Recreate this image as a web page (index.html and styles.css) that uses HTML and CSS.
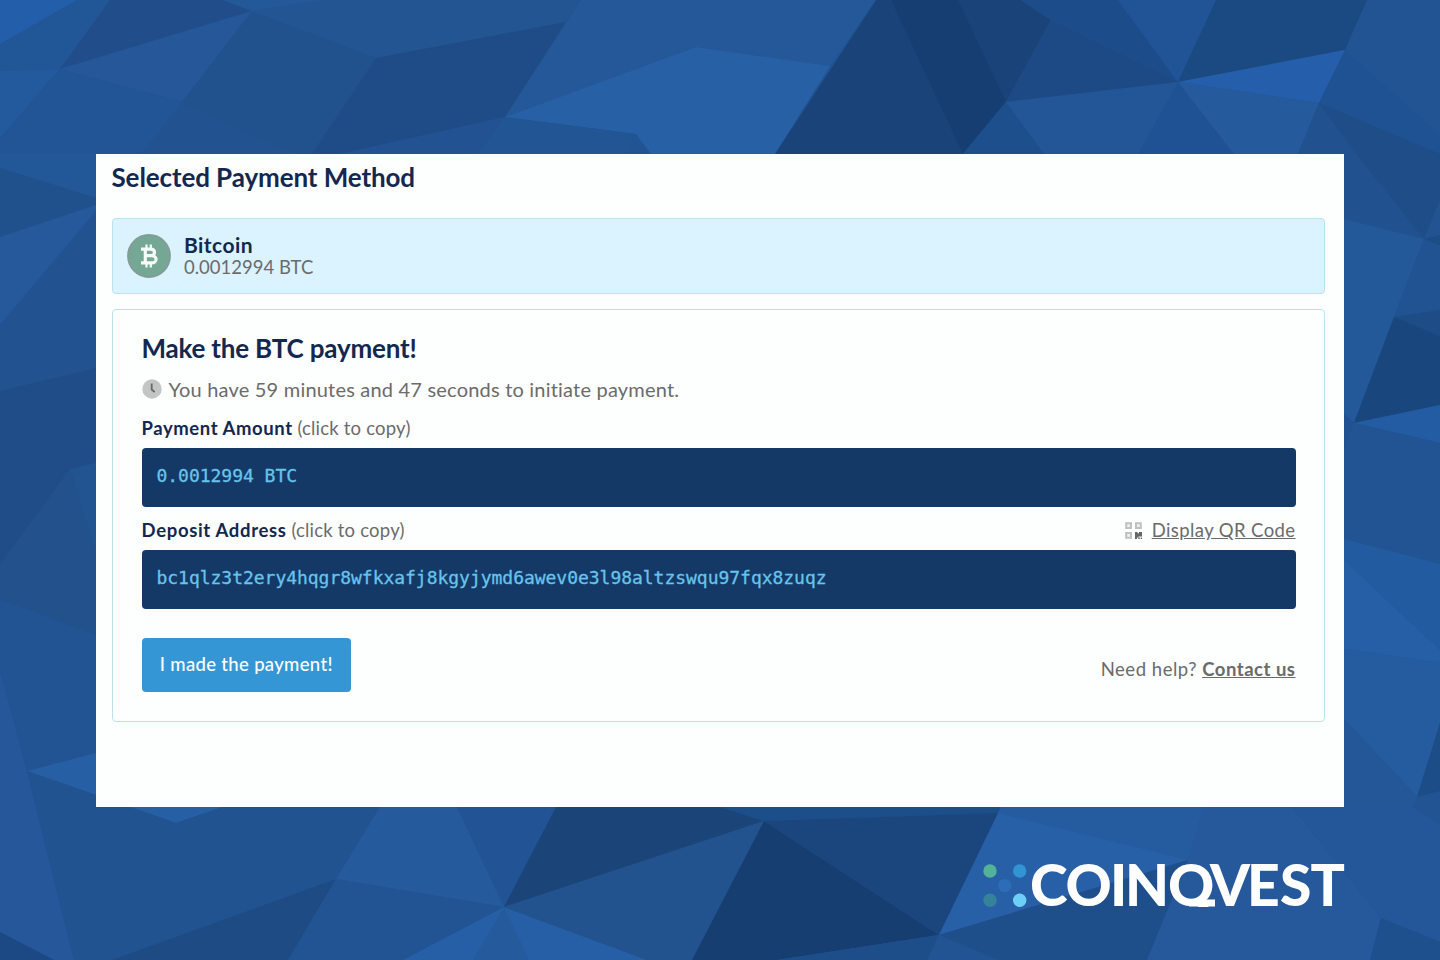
FILE: index.html
```
<!DOCTYPE html>
<html lang="en">
<head>
    <meta charset="UTF-8">
    <meta name="viewport" content="width=device-width, initial-scale=1.0">
    <title>COINQVEST Checkout</title>
    <link rel="stylesheet" href="styles.css">
</head>
<body>
  <svg class="backdrop" viewBox="0 0 1440 960" preserveAspectRatio="none" aria-hidden="true">
    <rect width="1440" height="960" fill="#225494"/>
    <!-- top -->
    <polygon fill="#225eaa" points="0,0 77,0 0,44"/>
    <polygon fill="#225797" points="77,0 110,0 60,69 0,71 0,44"/>
    <polygon fill="#214e8a" points="110,0 223,0 252,11 60,69"/>
    <polygon fill="#235899" points="223,0 325,0 252,11"/>
    <polygon fill="#235a9e" points="0,71 60,69 0,138"/>
    <polygon fill="#255799" points="60,69 252,11 182,102"/>
    <polygon fill="#225596" points="60,69 182,102 142,154 0,154 0,138"/>
    <polygon fill="#21528e" points="252,11 376,58 312,154 296,154 182,102"/>
    <polygon fill="#225390" points="182,102 296,154 142,154"/>
    <polygon fill="#225592" points="325,0 581,0 566,22 376,58 252,11"/>
    <polygon fill="#1f4c87" points="376,58 566,22 505,117 340,154 312,154"/>
    <polygon fill="#225291" points="505,117 478,154 340,154"/>
    <polygon fill="#255899" points="581,0 876,0 830,66 696,47 505,117"/>
    <polygon fill="#2760a5" points="696,47 830,66 775,154 651,154 636,134 505,117"/>
    <polygon fill="#225593" points="505,117 636,134 627,154 478,154"/>
    <polygon fill="#1a4479" points="876,0 1021,0 1051,20 1006,102 963,154 775,154"/>
    <polygon fill="#163e72" points="891,0 958,0 1006,102 963,154"/>
    <polygon fill="#1c4d8a" points="1021,0 1118,0 1178,82 1051,20"/>
    <polygon fill="#1d4984" points="1051,20 1178,82 1006,102"/>
    <polygon fill="#215496" points="1118,0 1216,0 1178,82"/>
    <polygon fill="#1b4982" points="1216,0 1367,0 1345,50 1178,82"/>
    <polygon fill="#255fab" points="1345,50 1319,103 1178,82"/>
    <polygon fill="#225696" points="1178,82 1234,154 963,154 1006,102"/>
    <polygon fill="#1f5294" points="1178,82 1234,154 1138,154"/>
    <polygon fill="#1d4f8d" points="1006,102 1044,154 963,154"/>
    <polygon fill="#255a9c" points="1178,82 1319,103 1298,154 1234,154"/>
    <polygon fill="#225494" points="1367,0 1440,0 1440,77 1345,50"/>
    <polygon fill="#1e5293" points="1345,50 1440,135 1440,154 1319,103"/>
    <!-- left -->
    <polygon fill="#225798" points="0,154 96,154 96,198 0,168"/>
    <polygon fill="#21518c" points="0,168 96,198 96,205 0,237"/>
    <polygon fill="#25599b" points="0,237 96,205 96,211 0,325"/>
    <polygon fill="#225390" points="0,325 96,211 96,368 0,391"/>
    <polygon fill="#204d87" points="0,391 96,368 96,463 70,469 0,565"/>
    <polygon fill="#215490" points="70,469 96,463 96,552"/>
    <polygon fill="#22518b" points="70,469 96,552 96,635 0,599 0,565"/>
    <polygon fill="#225494" points="0,599 96,635 96,753 27,771 0,672"/>
    <polygon fill="#25579a" points="0,672 27,771 74,960 54,960 0,932"/>
    <polygon fill="#275fa5" points="27,771 96,753 223,807 176,823 96,795"/>
    <!-- bottom -->
    <polygon fill="#215390" points="27,771 96,795 176,823 223,807 380,807 336,879 112,960 74,960"/>
    <polygon fill="#1e4b84" points="336,879 288,960 112,960"/>
    <polygon fill="#1c4983" points="0,932 54,960 0,960"/>
    <polygon fill="#255b9d" points="380,807 457,807 504,907 336,879"/>
    <polygon fill="#225495" points="457,807 556,807 504,907"/>
    <polygon fill="#225494" points="336,879 504,907 403,960 288,960"/>
    <polygon fill="#265fa5" points="504,907 647,960 403,960"/>
    <polygon fill="#255b9d" points="504,907 529,960 473,960"/>
    <polygon fill="#1b4479" points="556,807 720,807 764,821 504,907"/>
    <polygon fill="#22538f" points="504,907 764,821 692,960 647,960"/>
    <polygon fill="#173e71" points="764,821 939,935 777,960 692,960"/>
    <polygon fill="#1c4e8a" points="720,807 1001,807 998,813 764,821"/>
    <polygon fill="#1b467d" points="764,821 998,813 939,935"/>
    <polygon fill="#1e4e8a" points="777,960 939,935 927,960"/>
    <polygon fill="#2760a6" points="1001,807 1204,807 1188,860 939,935"/>
    <polygon fill="#255b9f" points="1001,807 1204,807 1188,860 998,813"/>
    <polygon fill="#1f4f8b" points="939,935 1188,860 1147,960 998,960"/>
    <polygon fill="#225494" points="939,935 998,960 927,960"/>
    <polygon fill="#25599c" points="1204,807 1292,807 1381,918 1370,960 1147,960 1188,860"/>
    <polygon fill="#235799" points="1292,807 1413,807 1440,825 1440,942 1381,918"/>
    <polygon fill="#1f508e" points="1381,918 1440,942 1440,960 1370,960"/>
    <!-- right -->
    <polygon fill="#21518e" points="1319,103 1356,154 1424,239 1344,219 1344,154 1298,154"/>
    <polygon fill="#1e4d88" points="1319,103 1440,154 1440,200 1424,239 1353,150"/>
    <polygon fill="#235899" points="1344,219 1424,239 1394,317 1354,423 1344,414"/>
    <polygon fill="#215292" points="1424,239 1440,235 1440,310 1394,317"/>
    <polygon fill="#1e4c85" points="1424,239 1440,235 1440,245"/>
    <polygon fill="#1e4c87" points="1394,317 1440,310 1440,336"/>
    <polygon fill="#1a467e" points="1394,317 1440,336 1440,405 1354,423"/>
    <polygon fill="#235ca2" points="1354,423 1440,405 1440,443"/>
    <polygon fill="#205190" points="1344,414 1354,423 1344,448"/>
    <polygon fill="#225494" points="1354,423 1440,443 1440,564 1344,539 1344,448"/>
    <polygon fill="#235ba1" points="1344,539 1440,564 1440,650 1344,560"/>
    <polygon fill="#265fa5" points="1344,560 1440,650 1440,663 1344,649"/>
    <polygon fill="#245c9f" points="1344,649 1440,663 1440,723 1417,797 1344,719"/>
    <polygon fill="#1d4d87" points="1440,723 1440,791 1417,797"/>
    <polygon fill="#235798" points="1344,719 1417,797 1413,807 1344,807"/>
  </svg>

  <div class="checkout">
    <h1>Selected Payment Method</h1>
    <div class="method">
      <svg class="coin" viewBox="0 0 44 44">
        <circle cx="22" cy="22" r="21" fill="#74a895" stroke="#849b99" stroke-width="1.800"/>
        <g fill="none" stroke="#f4fbf8" stroke-width="3.200">
          <path d="M14 15.200h9.500c5.400 0 5.400 6.500 0 6.500h-5.200M18.300 21.700h6.300c6 0 6 7.200 0 7.200h-10.600M18.300 15v14"/>
          <path stroke-width="2.200" d="M19.500 10.500v4M23.800 10.500v4M19.500 29.500v4M23.800 29.500v4"/>
        </g>
      </svg>
      <div class="method-text">
        <div class="method-name">Bitcoin</div>
        <div class="method-amount">0.0012994 BTC</div>
      </div>
    </div>

    <div class="payment">
      <h2>Make the BTC payment!</h2>
      <div class="timer">
        <svg class="clock" viewBox="0 0 20 20">
          <circle cx="10" cy="10" r="9.700" fill="#c3c4c4"/>
          <path d="M9.700 4.500v6l3 2.700" fill="none" stroke="#686868" stroke-width="1.800"/>
        </svg>
        <span class="timer-text">You have 59 minutes and 47 seconds to initiate payment.</span>
      </div>

      <div class="field-head">
        <div><span class="label amount-label">Payment Amount</span> <span class="hint">(click to copy)</span></div>
      </div>
      <div class="code">0.0012994 BTC</div>

      <div class="field-head address-head">
        <div><span class="label deposit-label">Deposit Address</span> <span class="hint">(click to copy)</span></div>
        <div class="qr">
          <svg class="qr-icon" viewBox="0 0 17 17">
            <g fill="#f0f0f0" stroke="#bfc0c0" stroke-width="2">
              <path d="M1.200 1.200h4.800v4.800h-4.800zM11 1.200h4.800v4.800h-4.800zM1.200 11h4.800v4.800h-4.800z"/>
            </g>
            <path fill="#666" d="M10 10h2.500v1.300h1.500v-1.300h3v4.500h-3.500v1h-1.500v1.500h-2zM13.300 15.500h1.500v1.500h-1.500zM15.700 15.500h1.300v1.500h-1.300z"/>
          </svg>
          <a class="qr-link">Display QR Code</a>
        </div>
      </div>
      <div class="code">bc1qlz3t2ery4hqgr8wfkxafj8kgyjymd6awev0e3l98altzswqu97fqx8zuqz</div>

      <div class="actions">
        <button>I made the payment!</button>
        <div class="help">Need help? <a>Contact us</a></div>
      </div>
    </div>
  </div>

  <div class="footer">
    <svg class="logo" viewBox="0 0 361 44">
      <clipPath id="wordmark">
        <rect x="44" y="-10" width="320" height="53"/>
      </clipPath>
      <circle cx="7" cy="7" r="6.700" fill="#52b398"/>
      <circle cx="36.700" cy="7" r="6.700" fill="#3394d4"/>
      <circle cx="21.800" cy="21.600" r="6.700" fill="#2d6cb7"/>
      <circle cx="7" cy="36.300" r="6.700" fill="#35839b"/>
      <circle cx="36.700" cy="36.300" r="6.700" fill="#6dcff6"/>
      <g clip-path="url(#wordmark)">
        <text class="logo-text" y="42" x="47 82.500 127 142 185 227 264 297 327.500">COINQVEST</text>
      </g>
      <!-- flat tail of the Q -->
      <rect x="206" y="35.500" width="26" height="7" fill="#fff"/>
    </svg>
  </div>
</body>
</html>
```
FILE: styles.css
```
body {
  font-family: Lato, 'Liberation Sans', sans-serif;
  background-color: #225494;
  color: #6b6b6b;
  margin: 0;
  height: 960px;
  padding: 154px 96px 0;
  box-sizing: border-box;
  overflow: hidden;
}
.backdrop {
  position: absolute;
  top: 0;
  left: 0;
  width: 1440px;
  height: 960px;
  z-index: -1;
}
.checkout {
  background-color: #fdfefe;
  height: 652.5px;
  padding: 5px 19px 0 15.5px;
  box-sizing: border-box;
}
h1, h2 {
  color: #14284f;
  font-size: 26px;
  line-height: 36px;
  font-weight: bold;
  margin: 0;
}
h1 {
  letter-spacing: -0.1px;
}
h2 {
  letter-spacing: -0.2px;
}
.method {
  display: flex;
  gap: 13.5px;
  height: 76px;
  margin-top: 23px;
  padding: 14.5px 14px 0;
  background-color: #daf3ff;
  border: 1.5px solid #b9e1ef;
  border-radius: 4px;
  box-sizing: border-box;
}
.coin {
  width: 44px;
  height: 44px;
}
.method-name {
  color: #14284f;
  font-size: 21px;
  line-height: 21px;
  font-weight: bold;
  letter-spacing: 0.45px;
}
.method-amount {
  font-size: 18.5px;
  line-height: 24px;
}
.payment {
  height: 413px;
  margin-top: 15px;
  padding: 20px 28.5px 0 29px;
  border: 1.5px solid #b9e1ef;
  border-radius: 4px;
  box-sizing: border-box;
}
.timer {
  display: flex;
  align-items: center;
  gap: 7px;
  height: 24px;
  margin-top: 11px;
  font-size: 20px;
}
.timer-text {
  letter-spacing: 0.2px;
  line-height: 22px;
}
.clock {
  width: 20px;
  height: 20px;
}
.field-head {
  display: flex;
  justify-content: space-between;
  align-items: center;
  height: 24px;
  margin-top: 15px;
  font-size: 18.5px;
  line-height: 24px;
}
.address-head {
  margin-top: 11px;
}
.label {
  color: #14284f;
  font-weight: bold;
}
.amount-label {
  letter-spacing: 0.58px;
}
.deposit-label {
  letter-spacing: 0.68px;
}
.hint {
  letter-spacing: 0.2px;
}
.code {
  height: 59px;
  margin-top: 8px;
  padding: 0 15px;
  background-color: #153966;
  color: #67c4ec;
  border-radius: 4px;
  box-sizing: border-box;
  font-family: 'DejaVu Sans Mono', monospace;
  font-size: 18px;
  line-height: 56px;
  letter-spacing: -0.03px;
  -webkit-text-stroke: 0.3px #67c4ec;
}
.qr {
  display: flex;
  align-items: center;
  gap: 10px;
}
.qr-icon {
  width: 17px;
  height: 17px;
}
.qr-link {
  letter-spacing: 0.4px;
}
a {
  text-decoration: underline;
}
.actions {
  display: flex;
  justify-content: space-between;
  height: 54px;
  margin-top: 28.5px;
}
button {
  width: 209.5px;
  height: 54px;
  background-color: #3596d6;
  color: white;
  font-family: inherit;
  font-size: 18.5px;
  font-weight: 500;
  letter-spacing: 0.33px;
  border: none;
  border-radius: 4px;
  padding: 0 0 1px;
}
.help {
  font-size: 18.5px;
  line-height: 62px;
  letter-spacing: 0.52px;
}
.help a {
  font-weight: bold;
}
.footer {
  display: flex;
  justify-content: flex-end;
  margin-top: 57px;
}
.logo {
  width: 361px;
  height: 44px;
  overflow: visible;
}
.logo-text {
  font-family: Lato, sans-serif;
  font-weight: 900;
  font-size: 57px;
  fill: #fff;
}
```
